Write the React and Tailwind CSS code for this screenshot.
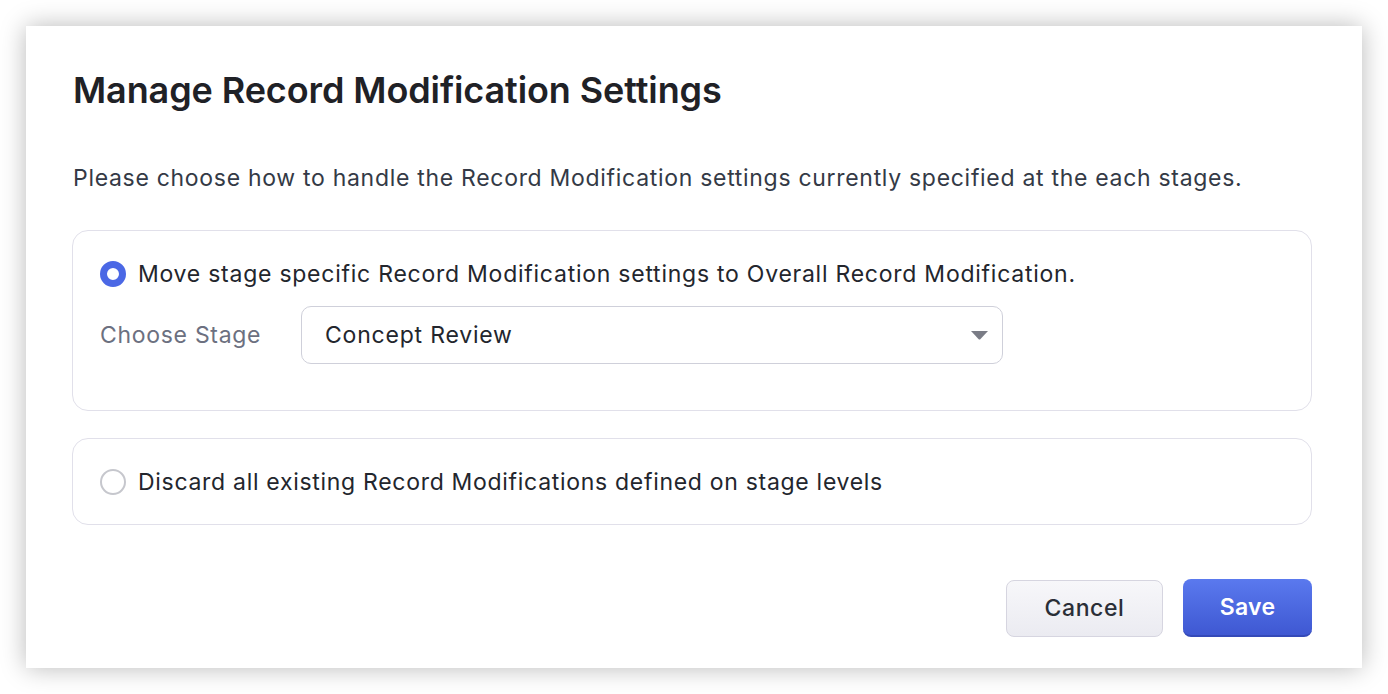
import React from "react";

export default function App() {
  return (
    <div className="w-[1388px] h-[694px] bg-white p-[26px]" style={{ fontFamily: "Inter, 'Noto Sans', sans-serif" }}>
      <div className="w-[1336px] h-[642px] bg-white shadow-[0_0_24px_rgba(0,0,0,0.28)] pl-[46px] pr-[50px] pt-[42px]">
        <h1 className="pl-[1px] text-[36px] leading-[44px] font-semibold text-[#1f2126] tracking-[-0.1px]">Manage Record Modification Settings</h1>
        <p className="pl-[1px] mt-[50px] text-[23px] leading-[32px] tracking-[0.7px] text-[#343a46]">Please choose how to handle the Record Modification settings currently specified at the each stages.</p>
        <div className="mt-[36px] h-[181px] rounded-[16px] border border-[#e1e0ea] px-[27px] pt-[28px]">
          <div className="flex items-center gap-[12px]">
            <span className="w-[26px] h-[26px] rounded-full border-[7px] border-[#4b68e5] bg-white" />
            <span className="text-[23px] leading-[30px] tracking-[0.75px] text-[#23262d]">Move stage specific Record Modification settings to Overall Record Modification.</span>
          </div>
          <div className="mt-[17px] flex items-center">
            <span className="w-[201px] text-[23px] tracking-[0.7px] text-[#6c7080]">Choose Stage</span>
            <div className="w-[702px] h-[58px] rounded-[10px] border border-[#cfd0da] flex items-center justify-between pl-[23px] pr-[14px]">
              <span className="text-[23px] tracking-[0.8px] text-[#23262d]">Concept Review</span>
              <svg width="17" height="9" viewBox="0 0 17 9"><path d="M0 0 H17 L9.3 8.2 Q8.5 9 7.7 8.2 Z" fill="#7a7c86" /></svg>
            </div>
          </div>
        </div>
        <div className="mt-[27px] h-[87px] rounded-[16px] border border-[#e1e0ea] px-[27px] flex items-center gap-[12px]">
          <span className="w-[26px] h-[26px] rounded-full border-[2px] border-[#c6c7cd] bg-white" />
          <span className="text-[23px] leading-[30px] tracking-[0.7px] text-[#23262d]">Discard all existing Record Modifications defined on stage levels</span>
        </div>
        <div className="mt-[54px] flex justify-end items-center gap-[20px]">
          <button className="w-[157px] h-[57px] rounded-[8px] border border-[#d6d5e0] bg-gradient-to-b from-[#f7f7fa] to-[#ebebf1] text-[23px] tracking-[0.6px] text-[#2a2e37] font-medium">Cancel</button>
          <button className="w-[129px] h-[58px] rounded-[8px] bg-gradient-to-b from-[#5a79ee] to-[#3f58d2] border-b-[2px] border-[#3449b8] text-[23px] tracking-[0.3px] text-white font-semibold">Save</button>
        </div>
      </div>
    </div>
  );
}
